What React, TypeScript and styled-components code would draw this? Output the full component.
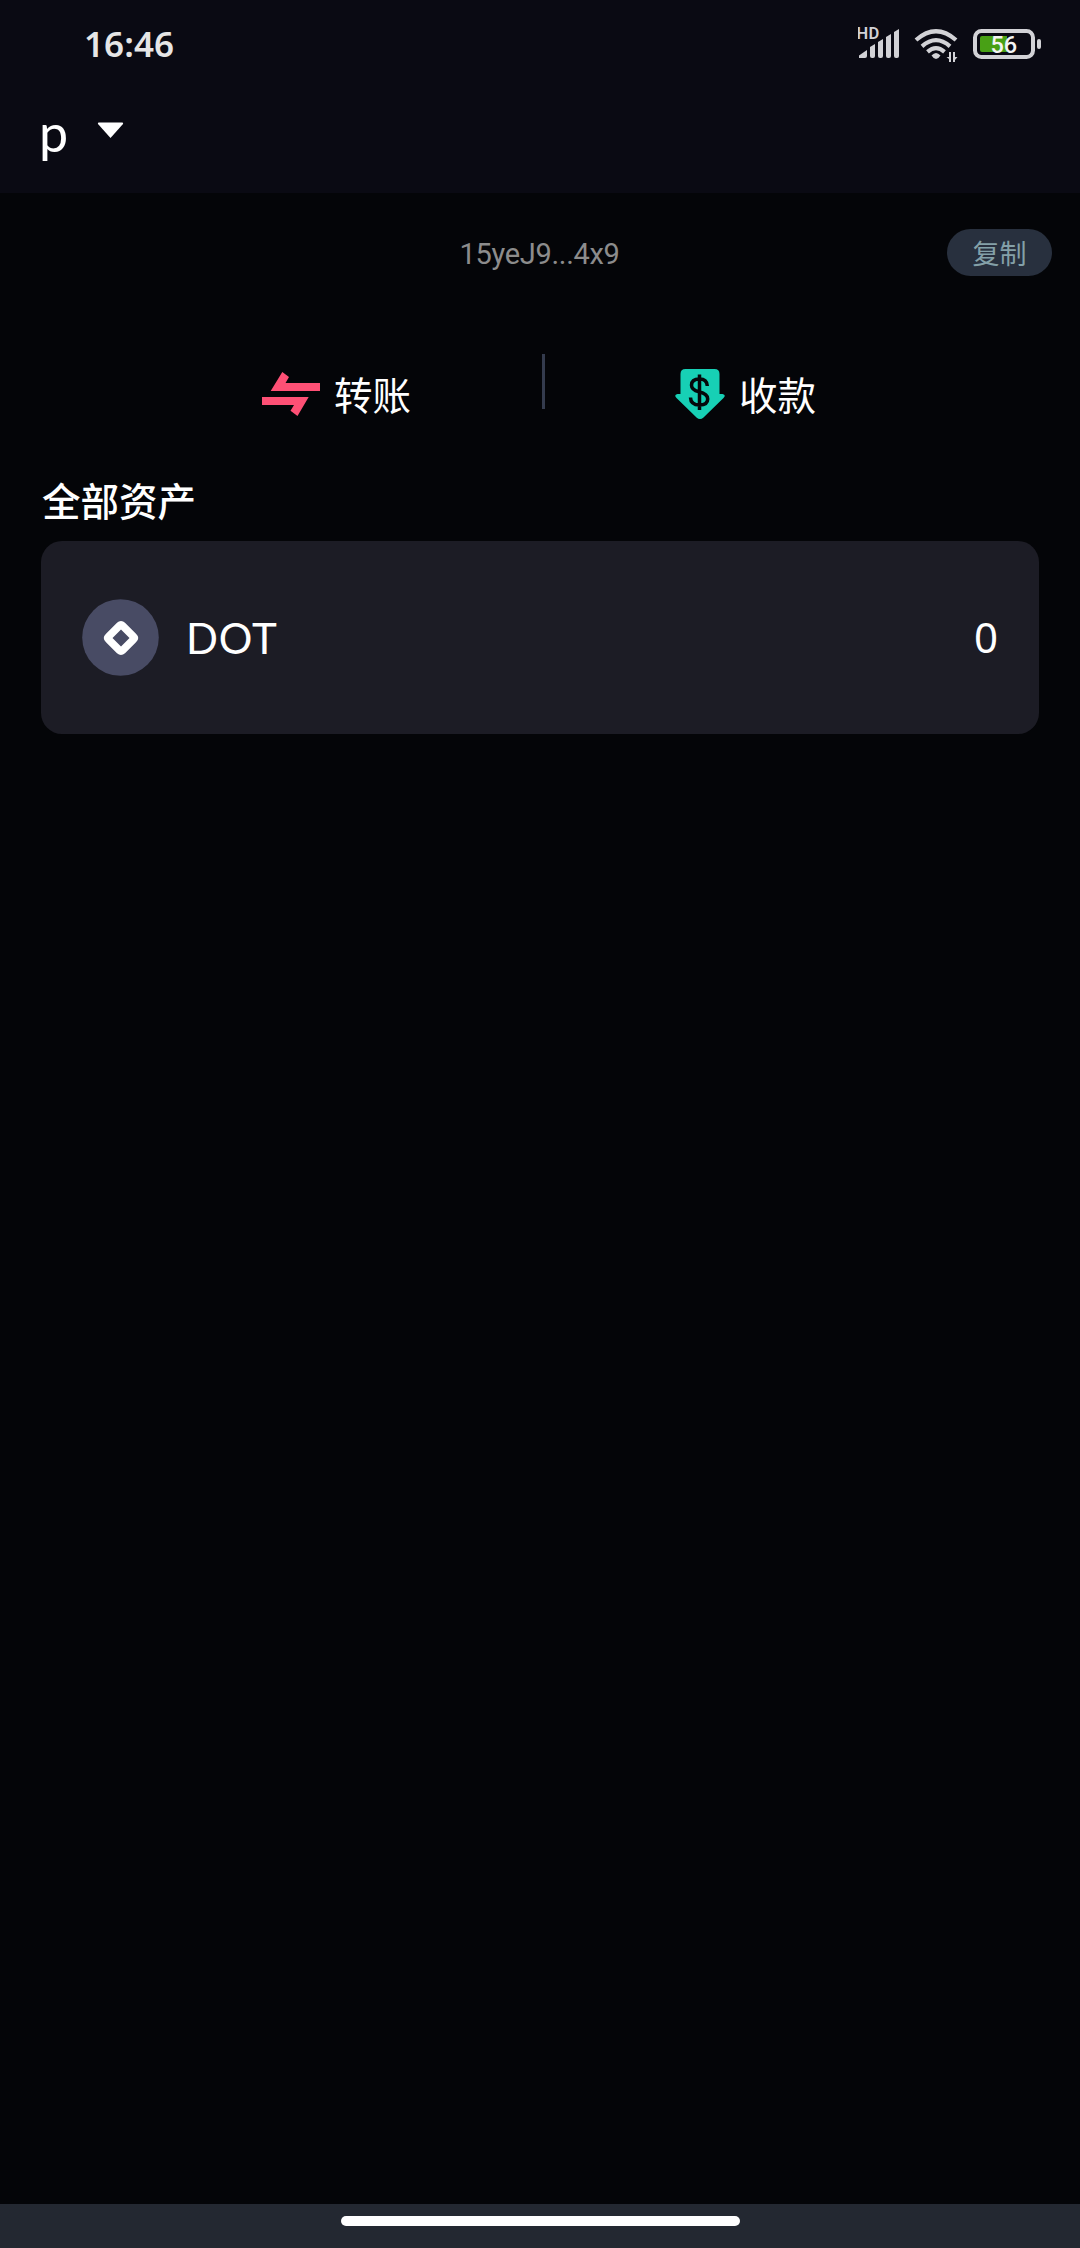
import React from 'react';
import styled, { createGlobalStyle } from 'styled-components';

const cjk = '"Noto Sans CJK SC", sans-serif';

const GlobalStyle = createGlobalStyle`
  body { margin: 0; background: #040508; }
  * { box-sizing: border-box; }
`;

const Screen = styled.div`
  width: 1080px;
  height: 2248px;
  display: flex;
  flex-direction: column;
  background: #040508;
  color: #fff;
  font-family: Lato, ${cjk};
  overflow: hidden;
`;

const Header = styled.header`
  height: 193px;
  background: #0a0a13;
`;

const StatusBar = styled.div`
  height: 88px;
  display: flex;
  justify-content: space-between;
  padding: 0 38px 0 84px;
`;

const Clock = styled.span`
  font: 600 35px/88px "Noto Sans", sans-serif;
  letter-spacing: 0.1px;
  color: #e6e6e6;
`;

const StatusIcons = styled.svg`
  width: 184px;
  height: 88px;
`;

const AccountPicker = styled.div`
  display: flex;
  align-items: flex-start;
  padding: 6px 0 0 39px;
`;

const AccountName = styled.span`
  width: 58px;
  font: 400 52px/76px Lato, sans-serif;
`;

const Caret = styled.svg`
  width: 27px;
  height: 17px;
  margin-top: 28px;
`;

const AddressRow = styled.div`
  display: grid;
  grid-template-columns: 1fr auto 1fr;
  align-items: start;
  height: 48px;
  margin-top: 36px;
  padding: 0 28px;
`;

const Address = styled.span`
  grid-column: 2;
  font: 400 29px/48px Roboto, sans-serif;
  letter-spacing: -0.3px;
  color: #8c8c8c;
  padding: 1px 1px 0 0;
`;

const CopyButton = styled.button`
  justify-self: end;
  width: 105px;
  height: 47px;
  padding: 0;
  border: 0;
  border-radius: 24px;
  background: #28303e;
  color: #84a0a8;
  font: 400 27px/46px ${cjk};
`;

const Actions = styled.div`
  display: flex;
  height: 55px;
  margin-top: 77px;
`;

const Divider = styled.i`
  width: 3px;
  height: 55px;
  background: #343b4d;
`;

const Action = styled.div<{ $start: number; $width: number; $gap: number }>`
  display: flex;
  align-items: flex-start;
  width: ${(p) => p.$width}px;
  padding-left: ${(p) => p.$start}px;
  gap: ${(p) => p.$gap}px;
`;

const ActionIcon = styled.svg<{ $top: number }>`
  flex: none;
  margin-top: ${(p) => p.$top}px;
`;

const ActionLabel = styled.span`
  font: 400 38.5px/56px ${cjk};
  margin-top: 11px;
`;

const SectionTitle = styled.h2`
  margin: 62px 0 0 42px;
  height: 70px;
  font: 500 38.5px/56px ${cjk};
`;

const AssetCard = styled.div`
  display: flex;
  align-items: center;
  height: 193px;
  margin: 0 41px;
  padding: 0 41px;
  border-radius: 21px;
  background: #1c1c25;
`;

const TokenIcon = styled.svg`
  width: 77px;
  height: 77px;
`;

const TokenName = styled.span`
  margin-left: 27px;
  font-size: 42px;
  line-height: 60px;
  letter-spacing: 0.9px;
`;

const Balance = styled.span`
  margin-left: auto;
  padding-bottom: 2px;
  font: 400 42px/60px "Noto Sans", sans-serif;
`;

const NavBar = styled.footer`
  display: flex;
  justify-content: center;
  height: 44px;
  margin-top: auto;
  padding-top: 12px;
  background: #232831;
`;

const HomeIndicator = styled.i`
  width: 399px;
  height: 10px;
  border-radius: 5px;
  background: #fff;
`;

const Status = () => (
  <StatusIcons viewBox="858 0 184 88" fill="#d2d2d6">
    <text x="856.500" y="39" fontFamily="Roboto" fontWeight="600" fontSize="16.5" letterSpacing="0.3">HD</text>
    <path d="M859 58v-2.500l8-5.500v6a2 2 0 0 1-2 2z" />
    <path d="M870 47l5-3v12a2 2 0 0 1-2 2h-1a2 2 0 0 1-2-2z" />
    <path d="M878 42l5-3v17a2 2 0 0 1-2 2h-1a2 2 0 0 1-2-2z" />
    <path d="M886 37l5-3v22a2 2 0 0 1-2 2h-1a2 2 0 0 1-2-2z" />
    <path d="M894 32l5-3v27a2 2 0 0 1-2 2h-1a2 2 0 0 1-2-2z" />
    <g fill="none" stroke="#d2d2d6" strokeWidth="4.2">
      <path d="M916 40Q936 22.500 956 40" />
      <path d="M922 46.300Q936 34 950 46.300" />
      <path d="M927.500 51.800Q936 44.500 944.500 51.800" />
    </g>
    <path d="M931.500 55.500Q936 50.500 940.500 55.500Q936 62.500 931.500 55.500z" />
    <path d="M949 52h2v10h-2v-3l-2.500-2H949zM953 62V52h2v5h2.500l-2.500 3v2z" />
    <rect x="975" y="31" width="58" height="26" rx="6.500" fill="none" stroke="#d2d2d6" strokeWidth="4" />
    <rect x="1037" y="39" width="4" height="10" rx="2" />
    <path d="M982 36h25v16h-25a2 2 0 0 1-2-2V38a2 2 0 0 1 2-2z" fill="#48a015" />
    <text x="990.500" y="52.700" fill="#f4f4f4" fontFamily="Roboto" fontWeight="500" fontSize="23.5">56</text>
  </StatusIcons>
);

export default function App() {
  return (
    <Screen>
      <GlobalStyle />
      <Header>
        <StatusBar>
          <Clock>16:46</Clock>
          <Status />
        </StatusBar>
        <AccountPicker>
          <AccountName>p</AccountName>
          <Caret viewBox="0 0 27 17">
            <path d="M1.500.500h24q1 .5.500 1.500L13.500 16 1 2Q.5 1 1.500.500z" fill="#fff" />
          </Caret>
        </AccountPicker>
      </Header>
      <AddressRow>
        <Address>15yeJ9...4x9</Address>
        <CopyButton>复制</CopyButton>
      </AddressRow>
      <Actions>
        <Action $start={262} $width={542} $gap={14}>
          <ActionIcon $top={18} width="58" height="44" viewBox="262 372 58 44">
            <path
              d="M282.300 372l6.700 5-3.500 6H320v8h-49.300zM262 397h46.700L297.500 416l-7-5.300 3.500-5.700h-32z"
              fill="#fe5075"
            />
          </ActionIcon>
          <ActionLabel>转账</ActionLabel>
        </Action>
        <Divider />
        <Action $start={130} $width={535} $gap={14}>
          <ActionIcon $top={15} width="50" height="50" viewBox="675 369 50 50">
            <path
              d="M685.500 369h29q5 0 5 5v20h3q4 1 1 4l-20 19.500q-3.500 3-7 0L676.500 398q-3-3 1-4h3v-20q0-5 5-5z"
              fill="#17d0b5"
            />
            <path
              d="M707.300 386q-.3-7-7.800-7-8 0-8 6.300 0 4.700 7.500 6.500 8.700 2 8.700 7.200 0 6-8.200 6-8.800 0-9-7.500M699.500 374.500v35.500"
              fill="none"
              stroke="#05080b"
              strokeWidth="3.500"
            />
          </ActionIcon>
          <ActionLabel>收款</ActionLabel>
        </Action>
      </Actions>
      <SectionTitle>全部资产</SectionTitle>
      <AssetCard>
        <TokenIcon viewBox="0 0 77 77">
          <circle cx="38.500" cy="38.500" r="38.300" fill="#484b64" />
          <path d="M39 22q2.300 0 4 1.700l11 11q4.500 4.300 0 8.600l-11 11q-4 3.500-8 0l-11-11q-4.500-4.300 0-8.600l11-11Q36.700 22 39 22zM39 30.500L30.500 39l8.500 8.500L47.500 39z" fill="#fff" fillRule="evenodd" />
        </TokenIcon>
        <TokenName>DOT</TokenName>
        <Balance>0</Balance>
      </AssetCard>
      <NavBar>
        <HomeIndicator />
      </NavBar>
    </Screen>
  );
}
